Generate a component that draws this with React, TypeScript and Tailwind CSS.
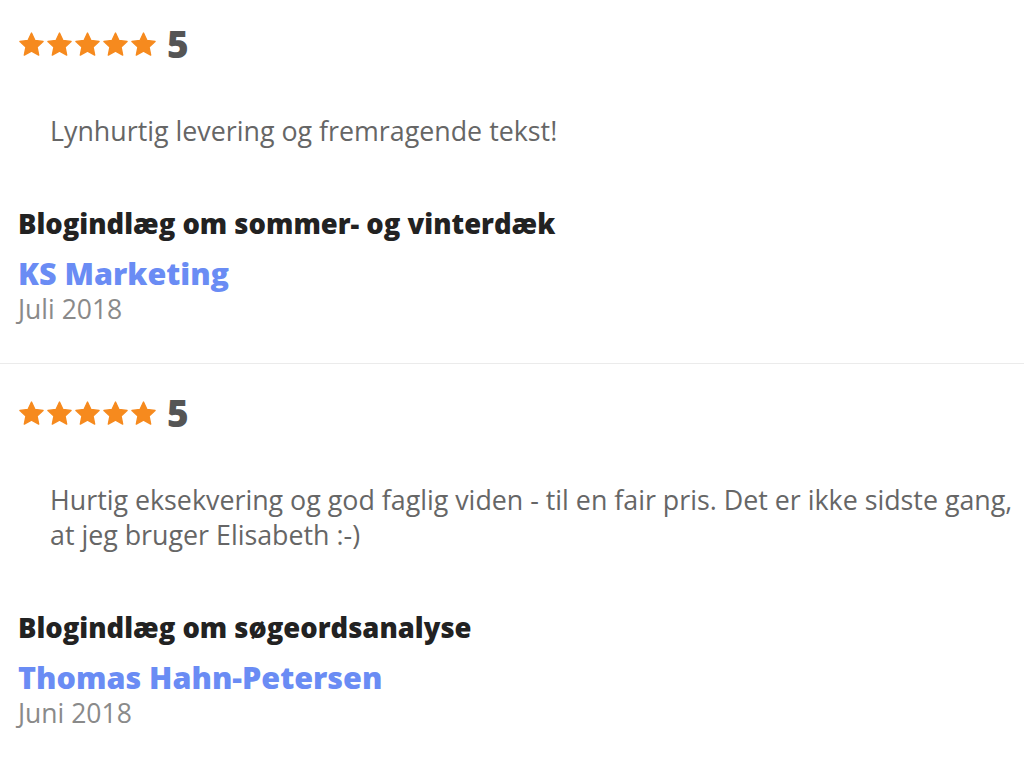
import React from "react";

function Star() {
  return (
    <svg viewBox="0 0 24 24" className="w-[27px] h-[27px]" fill="#f68a1e">
      <path d="M12 1.8l3.1 6.6 7.2.9-5.3 5 1.4 7.1L12 17.9l-6.4 3.5 1.4-7.1-5.3-5 7.2-.9z" strokeLinejoin="round" stroke="#f68a1e" strokeWidth="1.2" />
    </svg>
  );
}

function Review({
  text,
  title,
  name,
  date,
  top,
  bottomBorder,
}: {
  text: string;
  title: string;
  name: string;
  date: string;
  top: string;
  bottomBorder: boolean;
}) {
  return (
    <div className={`${top} pl-[18px] pr-[8px] ${bottomBorder ? "border-b border-[#ebebeb] pb-[38px]" : "pb-[40px]"}`}>
      <div className="flex items-center h-[34px]">
        <div className="flex gap-[1px]">
          <Star />
          <Star />
          <Star />
          <Star />
          <Star />
        </div>
        <span className="ml-[10px] text-[37px] leading-[34px] font-extrabold text-[#555555]">5</span>
      </div>
      <p className="mt-[52px] pl-[32px] text-[26.8px] leading-[35px] text-[#666666]">{text}</p>
      <div className="mt-[58px] text-[27.4px] leading-[36px] font-extrabold text-[#222222]">{title}</div>
      <div className="mt-[11px] text-[30.5px] leading-[40px] font-extrabold text-[#6a8cf4]">{name}</div>
      <div className="text-[26.5px] leading-[32px] text-[#8a8a8a]">{date}</div>
    </div>
  );
}

export default function App() {
  return (
    <div className="w-[1024px] h-[784px] bg-white overflow-hidden" style={{ fontFamily: '"Open Sans", sans-serif' }}>
      <Review
        top="pt-[27px]"
        text="Lynhurtig levering og fremragende tekst!"
        title="Blogindlæg om sommer- og vinterdæk"
        name="KS Marketing"
        date="Juli 2018"
        bottomBorder
      />
      <Review
        top="pt-[32px]"
        text="Hurtig eksekvering og god faglig viden - til en fair pris. Det er ikke sidste gang, at jeg bruger Elisabeth :-)"
        title="Blogindlæg om søgeordsanalyse"
        name="Thomas Hahn-Petersen"
        date="Juni 2018"
        bottomBorder={false}
      />
    </div>
  );
}
